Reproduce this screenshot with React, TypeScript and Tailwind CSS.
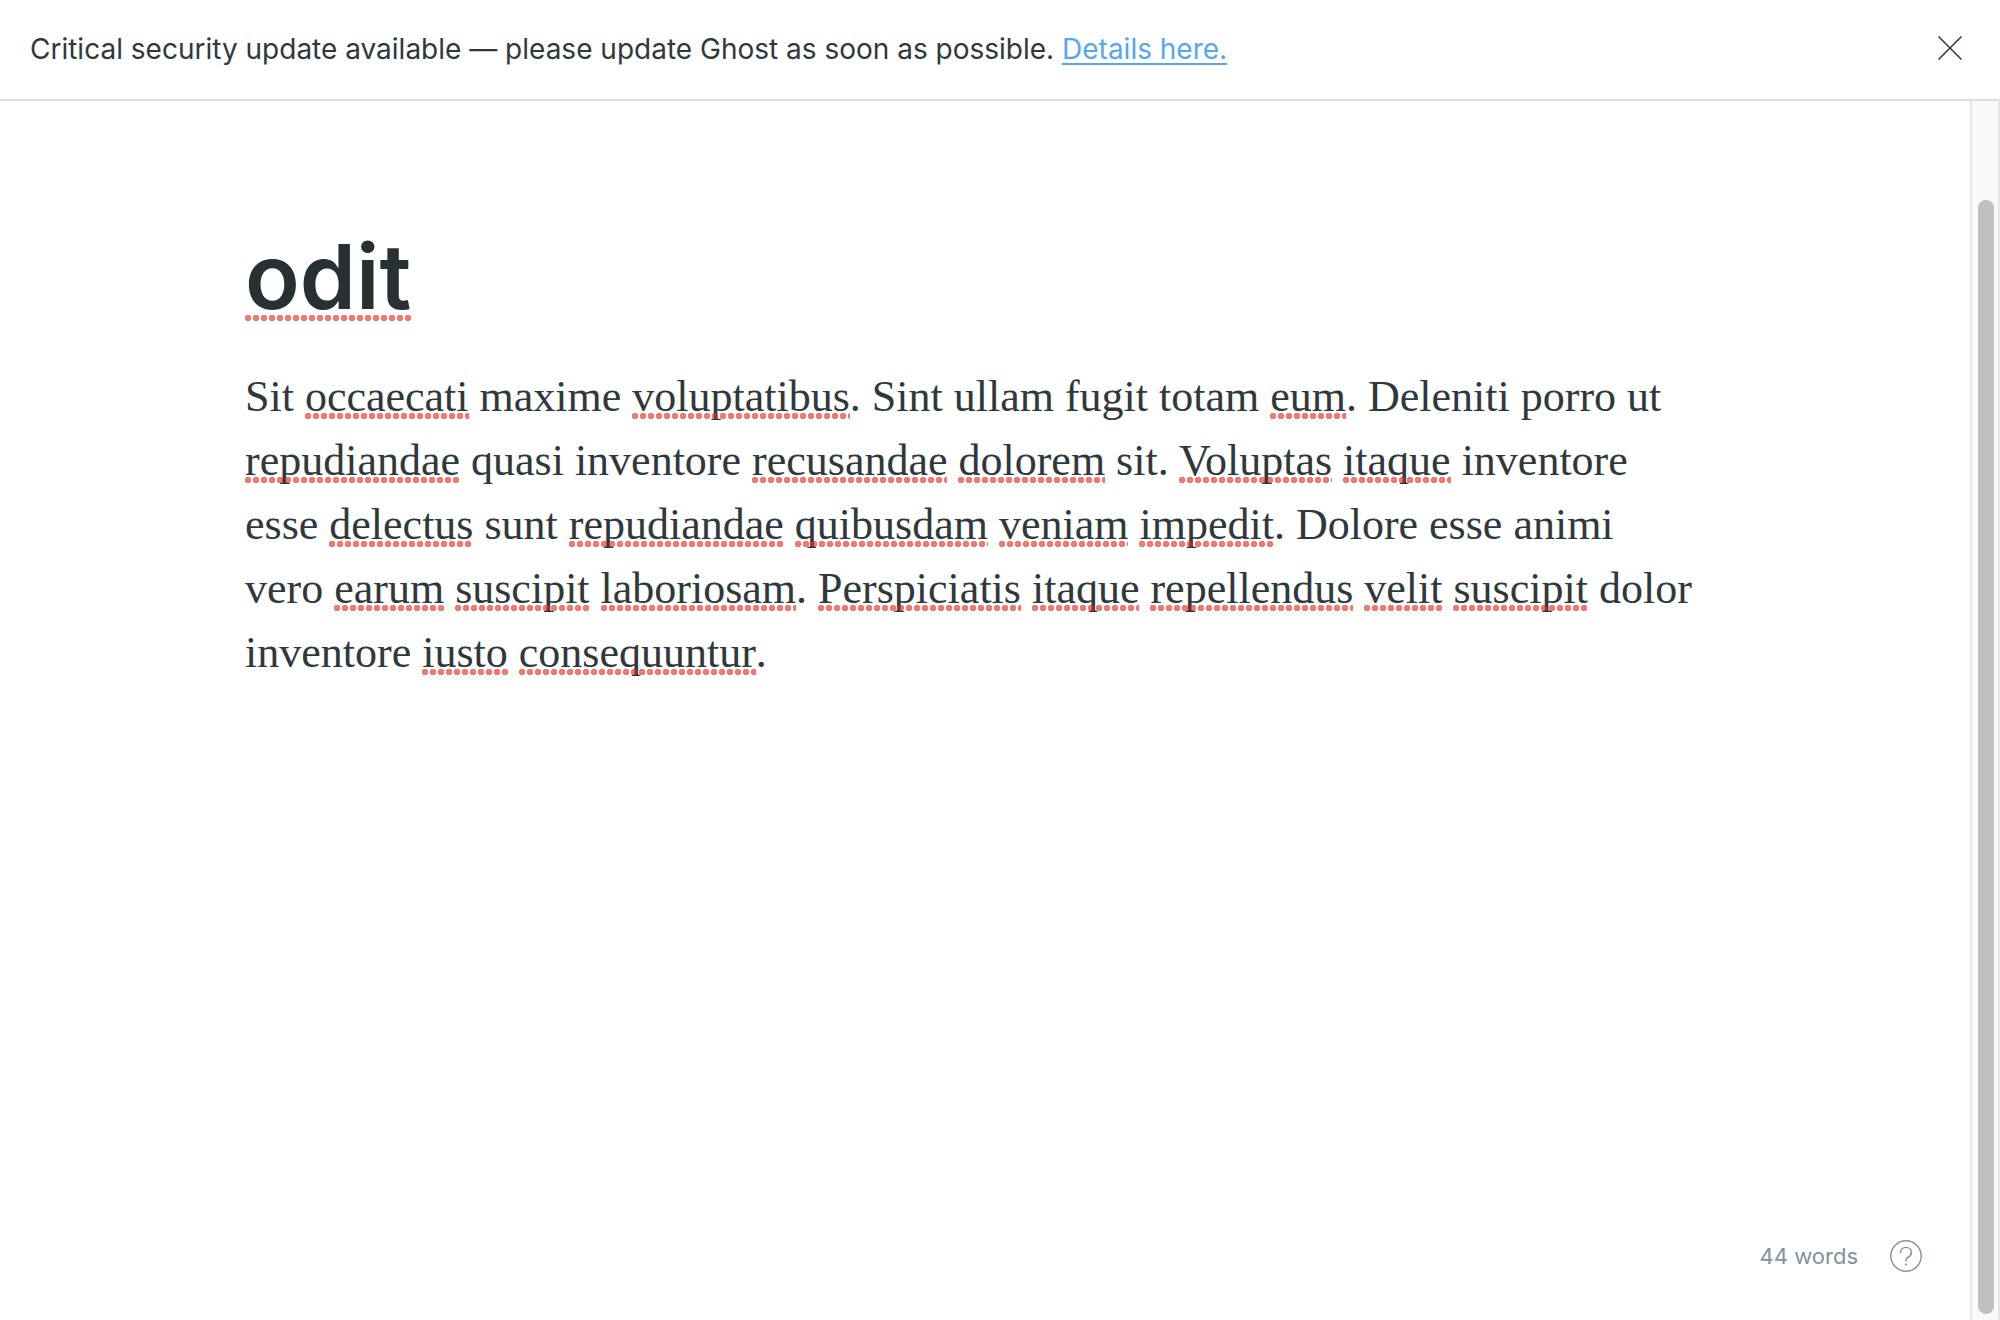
import React from "react";

const LINES = [
  "Sit *occaecati* maxime *voluptatibus*. Sint ullam fugit totam *eum*. Deleniti porro ut",
  "*repudiandae* quasi inventore *recusandae* *dolorem* sit. *Voluptas* *itaque* inventore",
  "esse *delectus* sunt *repudiandae* *quibusdam* *veniam* *impedit*. Dolore esse animi",
  "vero *earum* *suscipit* *laboriosam*. *Perspiciatis* *itaque* *repellendus* *velit* *suscipit* dolor",
  "inventore *iusto* *consequuntur*.",
];

function Misspelled({ children, className = "after:bottom-0.5" }: { children: React.ReactNode; className?: string }) {
  return (
    <span
      className={`relative after:absolute after:inset-x-0 after:h-[6px] after:bg-[radial-gradient(circle_at_3px_3px,rgba(234,37,24,0.62)_3px,transparent_3px)] after:bg-[length:8px_6px] after:bg-repeat-x after:content-[''] ${className}`}
    >
      {children}
    </span>
  );
}

function Line({ text }: { text: string }) {
  return (
    <>
      {text.split("*").map((part, i) =>
        i % 2 === 1 ? <Misspelled key={i}>{part}</Misspelled> : part
      )}
    </>
  );
}

export default function App() {
  return (
    <div className="flex h-screen flex-col bg-white font-['Inter',sans-serif] text-[#2f383c]">
      <header className="flex shrink-0 items-start justify-between border-b-2 border-[#dddfdf] py-7 pr-9 pl-[30px]">
        <p className="text-[28px] leading-[43px]">
          Critical security update available — please update Ghost as soon as possible.{" "}
          <a href="#details" className="text-[#57a6ee] underline decoration-2 underline-offset-4">
            Details here.
          </a>
        </p>
        <button type="button" aria-label="Close" className="flex h-10 w-7 items-center justify-center">
          <svg viewBox="0 0 24 24" className="size-6" fill="none" stroke="currentColor" strokeWidth="1.5">
            <path d="M0.5 0.5 23.5 23.5M23.5 0.5 0.5 23.5" />
          </svg>
        </button>
      </header>

      <div className="flex min-h-0 flex-1">
        <main className="flex min-w-0 flex-1 flex-col">
          <article className="flex-1 px-[245px] pt-[120px]">
            <h1 className="text-[90px] leading-[112px] font-semibold text-[#283033]">
              <Misspelled className="after:bottom-2.5">odit</Misspelled>
            </h1>
            <p className="mt-8 font-['Liberation_Serif',serif] text-[44px] leading-[64px] whitespace-nowrap">
              {LINES.map((line) => (
                <React.Fragment key={line}>
                  <Line text={line} />
                  <br />
                </React.Fragment>
              ))}
            </p>
          </article>
          <footer className="flex items-center justify-end gap-8 pr-12 pb-12 text-[#7f929e]">
            <span className="text-[22px] leading-8">44 words</span>
            <button type="button" aria-label="Help">
              <svg viewBox="0 0 32 32" className="size-8" fill="none" stroke="currentColor" strokeWidth="1.4" strokeLinecap="round">
                <circle cx="16" cy="16" r="15.2" />
                <path d="M10.6 12.6C10.6 9.5 13 7.4 16 7.4c3 0 5.4 2.1 5.4 5 0 2.300-1.300 3.800-3 4.600-1.500.7-2.400 1.500-2.400 3v1" />
                <circle cx="16" cy="24.600" r="1" fill="currentColor" stroke="none" />
              </svg>
            </button>
          </footer>
        </main>
        <div className="flex w-[30px] shrink-0 justify-end border-x-2 border-[#e6e6e6] bg-[#f9f9f9] pt-[99px] pr-1 pb-1.5">
          <div className="w-4 rounded-full bg-[#c0c0c0]" />
        </div>
      </div>
    </div>
  );
}
